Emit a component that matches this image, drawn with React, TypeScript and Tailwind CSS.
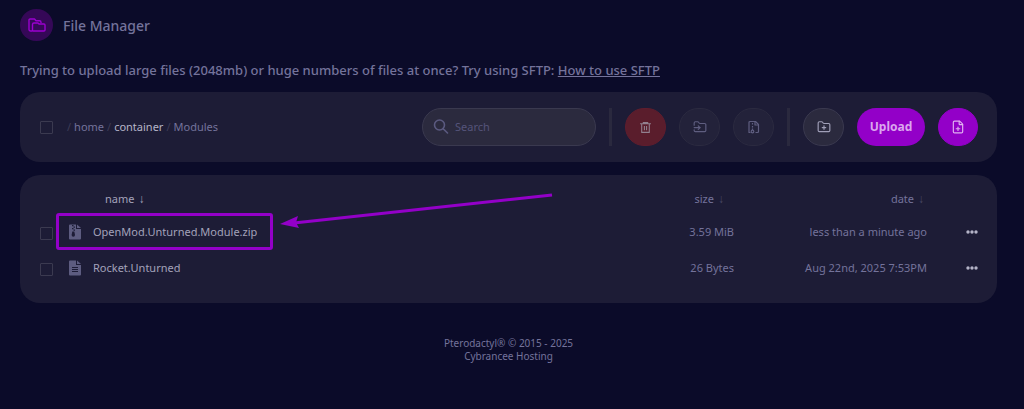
import type { ReactNode } from "react";
import { FilePlus, FolderInput, FolderPlus } from "lucide-react";
import { RiDeleteBin6Line } from "react-icons/ri";

type Entry = { name: string; size: string; date: string; zip: boolean };

const entries: Entry[] = [
  { name: "OpenMod.Unturned.Module.zip", size: "3.59 MiB", date: "less than a minute ago", zip: true },
  { name: "Rocket.Unturned", size: "26 Bytes", date: "Aug 22nd, 2025 7:53PM", zip: false },
];

function FoldersIcon() {
  return (
    <svg viewBox="0 0 18 14" className="h-[14px] w-[18px]" fill="none" stroke="currentColor" strokeWidth="1.400" strokeLinejoin="round" aria-hidden="true">
      <path d="M4.500 13H2.500A1.500 1.500 0 0 1 1 11.500V2a1 1 0 0 1 1-1h4.500l1.500 1.800h3.500a1.500 1.500 0 0 1 1.500 1.500V5" />
      <path d="M6 5h4l1 1h5a1 1 0 0 1 1 1v5a1 1 0 0 1-1 1H5.500a1 1 0 0 1-1-1V6.500A1.500 1.500 0 0 1 6 5z" />
    </svg>
  );
}

function SearchIcon() {
  return (
    <svg viewBox="0 0 16 16" className="size-4 shrink-0" fill="none" stroke="currentColor" strokeWidth="1.600" strokeLinecap="round" aria-hidden="true">
      <circle cx="6.500" cy="6" r="5" />
      <path d="M10.200 9.700L14.500 14" />
    </svg>
  );
}

function ArchiveIcon() {
  return (
    <svg viewBox="0 0 14 14" className="size-[14px]" fill="none" stroke="currentColor" strokeWidth="1.200" strokeLinejoin="round" aria-hidden="true">
      <path d="M3.500 12.500H2V2.500a1 1 0 0 1 1-1h5.500l3 3v7a1 1 0 0 1-1 1H8.500" />
      <path d="M8 1.500v3.500h3.500" />
      <path d="M5.500 3v1.500M5.500 6v1.500M5.500 8.500v1.500" />
      <circle cx="5.500" cy="11.500" r="1.300" />
    </svg>
  );
}

function FileGlyph({ zip }: { zip: boolean }) {
  return (
    <svg viewBox="0 0 12 16" className="ml-px h-4 w-3 text-[#5d5c80]" fill="currentColor" aria-hidden="true">
      <path d="M1 .5h6v4.500h5v9.500a1 1 0 0 1-1 1H1a1 1 0 0 1-1-1v-13a1 1 0 0 1 1-1z" />
      <path d="M8 .5L12 4H8z" />
      {zip ? (
        <g fill="#1d1c36">
          <path d="M3 1h1.500v1.200H3zM4.500 2.500H6v1.200H4.500zM3 4h1.500v1.200H3zM4.500 5.500H6v1.200H4.500z" />
          <path d="M3.300 7.500h2L6 11a1.700 1.700 0 1 1-3.400 0z" />
        </g>
      ) : (
        <path d="M3 7.500h6M3 9.500h6M3 11.500h6" stroke="#1d1c36" strokeWidth="1" />
      )}
    </svg>
  );
}

function Check({ label }: { label: string }) {
  return (
    <input
      type="checkbox"
      aria-label={label}
      className="block size-[13px] shrink-0 appearance-none rounded-[1px] border border-[#3b3a50] checked:bg-[#9300c8]"
    />
  );
}

function RoundButton({ label, className, children }: { label: string; className: string; children: ReactNode }) {
  return (
    <button type="button" aria-label={label} className={`flex h-[38px] shrink-0 items-center justify-center rounded-full border ${className}`}>
      {children}
    </button>
  );
}

function SortButton({ label, arrow }: { label: string; arrow: string }) {
  return (
    <button type="button" className="inline-flex items-center gap-1">
      {label}
      <span className={`font-['Liberation_Sans',sans-serif] text-xs leading-4 ${arrow}`}>↓</span>
    </button>
  );
}

function Divider() {
  return <div className="h-[38px] w-[3px] shrink-0 bg-[#2a293e]" />;
}

export default function App() {
  return (
    <div className="min-h-screen bg-[#0b0b29] pr-[27px] pl-5 font-['Noto_Sans',sans-serif] text-[11px] text-[#74739b]">
      <header className="flex items-center gap-[10px] pt-[9px]">
        <span className="flex h-8 w-[33px] items-center justify-center rounded-full bg-[#350857] text-[#9a00cf]">
          <FoldersIcon />
        </span>
        <h1 className="pt-[2px] text-sm leading-6 font-medium">File Manager</h1>
      </header>

      <p className="mt-5 text-[13px] leading-[18px] font-medium">
        Trying to upload large files (2048mb) or huge numbers of files at once? Try using SFTP:{" "}
        <a href="#sftp" className="underline">How to use SFTP</a>
      </p>

      <section className="mt-[13px] flex items-center justify-between rounded-[20px] bg-[#1d1c36] py-4 pr-[19px] pl-5">
        <div className="flex items-center gap-[14px]">
          <Check label="Select all files" />
          <nav aria-label="Path" className="flex gap-[3px] leading-4">
            <span className="text-[#3e3d56]">/</span>
            <a href="#home">home</a>
            <span className="text-[#3e3d56]">/</span>
            <a href="#container" className="text-[#b5b4c8]">container</a>
            <span className="text-[#3e3d56]">/</span>
            <span>Modules</span>
          </nav>
        </div>
        <div className="flex items-center gap-[13px]">
          <label className="flex h-[38px] w-[174px] items-center gap-[6px] rounded-full border border-[#3a394f] bg-[#2b2a3e] px-[10px] text-[#5b5a80]">
            <SearchIcon />
            <input type="search" aria-label="Search" placeholder="Search" className="w-full min-w-0 bg-transparent outline-none placeholder:text-[#55547a]" />
          </label>
          <Divider />
          <RoundButton label="Delete" className="w-[41px] border-[#5f1d2d] bg-[#5a1d2c] text-[#92808f]">
            <RiDeleteBin6Line className="size-[13px]" />
          </RoundButton>
          <RoundButton label="Move" className="w-[41px] border-[#2b2a40] bg-[#23223a] text-[#5f5e80]">
            <FolderInput className="size-[14px]" />
          </RoundButton>
          <RoundButton label="Archive" className="w-[41px] border-[#2b2a40] bg-[#23223a] text-[#5f5e80]">
            <ArchiveIcon />
          </RoundButton>
          <Divider />
          <RoundButton label="New folder" className="w-[41px] border-[#3a394f] bg-[#2b2a3e] text-[#a09fb8]">
            <FolderPlus className="size-[14px]" />
          </RoundButton>
          <button type="button" className="h-[38px] w-[68px] rounded-full bg-[#9300c8] text-xs font-bold text-[#dba6ee]">
            Upload
          </button>
          <RoundButton label="New file" className="w-10 border-[#9300c8] bg-[#9300c8] text-[#e0b0f0]">
            <FilePlus className="size-[14px]" />
          </RoundButton>
        </div>
      </section>

      <section className="relative mt-[13px] rounded-[20px] bg-[#1d1c36] pt-[7px] pr-[19px] pb-[17px] pl-5">
        <table className="w-full table-fixed">
          <thead>
            <tr className="h-8">
              <th className="w-7" aria-label="Select" />
              <th className="w-[25px]" aria-label="Type" />
              <th className="pt-[2px] pl-3 text-left font-normal text-[#a3a2ba]">
                <SortButton label="name" arrow="text-[#a3a2ba]" />
              </th>
              <th className="w-[120px] pt-[2px] pr-[10px] text-right font-normal">
                <SortButton label="size" arrow="text-[#4a4965]" />
              </th>
              <th className="w-[193px] pt-[2px] pr-[3px] text-right font-normal">
                <SortButton label="date" arrow="text-[#4a4965]" />
              </th>
              <th className="w-[51px]" aria-label="Actions" />
            </tr>
          </thead>
          <tbody>
            {entries.map((entry) => (
              <tr key={entry.name} className="h-9">
                <td className="pt-[3px]"><Check label={`Select ${entry.name}`} /></td>
                <td><FileGlyph zip={entry.zip} /></td>
                <td className="text-[#a3a2ba]">{entry.name}</td>
                <td className="text-right">{entry.size}</td>
                <td className="text-right">{entry.date}</td>
                <td>
                  <button type="button" aria-label={`Actions for ${entry.name}`} className="ml-auto block">
                    <svg viewBox="0 0 12 4" className="h-1 w-3" fill="#b5b4c8" aria-hidden="true">
                      <circle cx="2" cy="2" r="1.700" />
                      <circle cx="6" cy="2" r="1.700" />
                      <circle cx="10" cy="2" r="1.700" />
                    </svg>
                  </button>
                </td>
              </tr>
            ))}
          </tbody>
        </table>
        <div className="pointer-events-none absolute top-[38px] left-9 h-[37px] w-[217px] rounded-[3px] border-3 border-[#9300c8]" />
        <svg viewBox="0 0 274 40" className="pointer-events-none absolute top-[14px] left-[260px] h-10 w-[274px]" aria-hidden="true">
          <path d="M14 34L272 6" stroke="#9300c8" strokeWidth="3" />
          <path d="M0 35L18 27L16 33.500L19 39z" fill="#9300c8" />
        </svg>
      </section>

      <footer className="mt-[34px] text-center text-[10px] leading-[13px]">
        <p>Pterodactyl® © 2015 - 2025</p>
        <p>Cybrancee Hosting</p>
      </footer>
    </div>
  );
}
